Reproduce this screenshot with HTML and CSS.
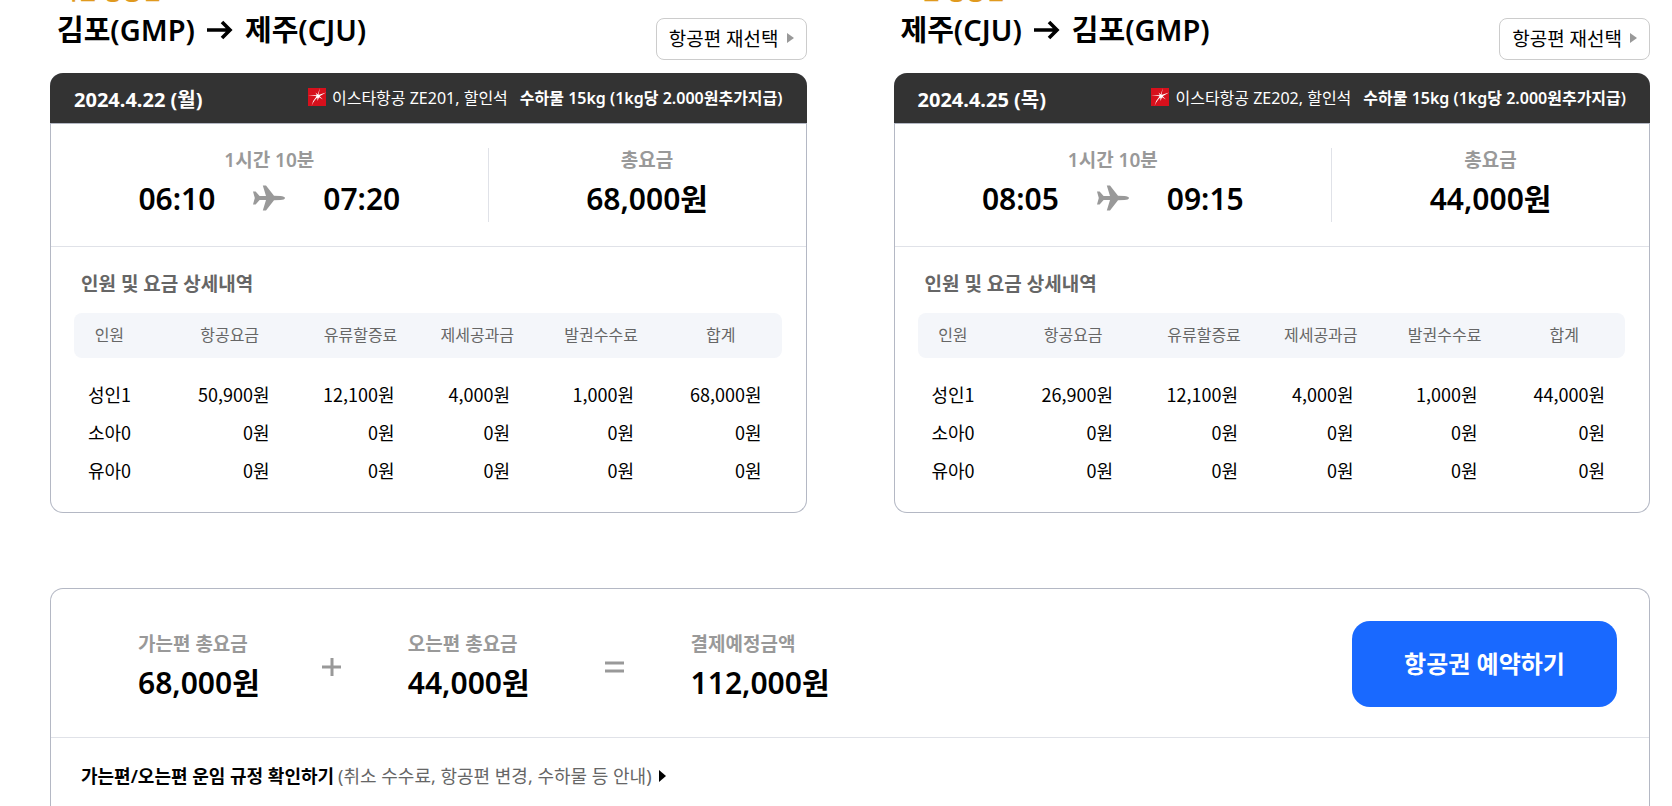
FILE: index.html
```html
<!DOCTYPE html>
<html lang="ko">
<head>
<meta charset="utf-8">
<title>항공권 예약</title>
<link rel="stylesheet" href="styles.css">
</head>
<body>
<svg class="defs" width="0" height="0" aria-hidden="true">
  <symbol id="arrow" viewBox="0 0 26 20"><path d="M0 10H23M15 2l8 8-8 8" fill="none" stroke="#000" stroke-width="3.600"/></symbol>
  <symbol id="plane" viewBox="0 0 32 26"><path d="M0 6.500h2.600l4 4.600L13 11 9.800.500h3.200L21 10.800l6.500.100c2.500.200 4.500 1 4.500 2.100s-2 1.900-4.500 2.100l-6.500.100L13 25.500H9.800L13 15l-6.400-.100-4 4.600H0L1.800 13z" fill="#999"/></symbol>
  <symbol id="star" viewBox="0 0 18 18"><rect width="18" height="18" fill="#d7101c"/><path d="M10.300 7.100L18 4.500 11.600 8.200 15 11.500 11 9.200 9.500 13 9.400 9.500Q6 12 3.500 18 5 12 8.600 8.300L0 7 8.800 7.300 7.500 4.500 9.700 6.500 12 0z" fill="#fff"/><circle cx="10" cy="8" r="1.600" fill="#fff"/></symbol>
</svg>
<main class="page">
  <div class="trips">
    <section class="trip">
      <header class="trip-head">
        <div>
          <p class="direction">가는 항공편</p>
          <h2 class="route">김포(GMP) <svg class="arrow"><use href="#arrow"/></svg> 제주(CJU)</h2>
        </div>
        <button class="reselect" type="button">항공편 재선택<span class="caret"></span></button>
      </header>
      <article class="card">
        <div class="card-bar">
          <strong class="date">2024.4.22 (월)</strong>
          <div class="airline"><svg class="logo"><use href="#star"/></svg><span>이스타항공 ZE201, 할인석</span><b>수하물 15kg (1kg당 2.000원추가지급)</b></div>
        </div>
        <div class="overview">
          <div class="flight">
            <p class="label">1시간 10분</p>
            <div class="times"><span>06:10</span><svg class="plane"><use href="#plane"/></svg><span>07:20</span></div>
          </div>
          <div class="fare"><p class="label">총요금</p><p class="amount">68,000원</p></div>
        </div>
        <div class="detail">
          <h3 class="detail-title">인원 및 요금 상세내역</h3>
          <table class="fares">
            <thead><tr><th class="who">인원</th><th class="base">항공요금</th><th class="fuel">유류할증료</th><th class="tax">제세공과금</th><th class="fee">발권수수료</th><th class="sum">합계</th></tr></thead>
            <tbody>
              <tr><td class="who">성인1</td><td class="base">50,900원</td><td class="fuel">12,100원</td><td class="tax">4,000원</td><td class="fee">1,000원</td><td class="sum">68,000원</td></tr>
              <tr><td class="who">소아0</td><td class="base">0원</td><td class="fuel">0원</td><td class="tax">0원</td><td class="fee">0원</td><td class="sum">0원</td></tr>
              <tr><td class="who">유아0</td><td class="base">0원</td><td class="fuel">0원</td><td class="tax">0원</td><td class="fee">0원</td><td class="sum">0원</td></tr>
            </tbody>
          </table>
        </div>
      </article>
    </section>
    <section class="trip">
      <header class="trip-head">
        <div>
          <p class="direction">오는 항공편</p>
          <h2 class="route">제주(CJU) <svg class="arrow"><use href="#arrow"/></svg> 김포(GMP)</h2>
        </div>
        <button class="reselect" type="button">항공편 재선택<span class="caret"></span></button>
      </header>
      <article class="card">
        <div class="card-bar">
          <strong class="date">2024.4.25 (목)</strong>
          <div class="airline"><svg class="logo"><use href="#star"/></svg><span>이스타항공 ZE202, 할인석</span><b>수하물 15kg (1kg당 2.000원추가지급)</b></div>
        </div>
        <div class="overview">
          <div class="flight">
            <p class="label">1시간 10분</p>
            <div class="times"><span>08:05</span><svg class="plane"><use href="#plane"/></svg><span>09:15</span></div>
          </div>
          <div class="fare"><p class="label">총요금</p><p class="amount">44,000원</p></div>
        </div>
        <div class="detail">
          <h3 class="detail-title">인원 및 요금 상세내역</h3>
          <table class="fares">
            <thead><tr><th class="who">인원</th><th class="base">항공요금</th><th class="fuel">유류할증료</th><th class="tax">제세공과금</th><th class="fee">발권수수료</th><th class="sum">합계</th></tr></thead>
            <tbody>
              <tr><td class="who">성인1</td><td class="base">26,900원</td><td class="fuel">12,100원</td><td class="tax">4,000원</td><td class="fee">1,000원</td><td class="sum">44,000원</td></tr>
              <tr><td class="who">소아0</td><td class="base">0원</td><td class="fuel">0원</td><td class="tax">0원</td><td class="fee">0원</td><td class="sum">0원</td></tr>
              <tr><td class="who">유아0</td><td class="base">0원</td><td class="fuel">0원</td><td class="tax">0원</td><td class="fee">0원</td><td class="sum">0원</td></tr>
            </tbody>
          </table>
        </div>
      </article>
    </section>
  </div>
  <section class="summary">
    <div class="totals">
      <div class="total"><p class="label">가는편 총요금</p><p class="amount">68,000원</p></div>
      <svg class="sign" viewBox="0 0 20 20" aria-label="더하기"><path d="M0 10h19M10 1v18" stroke="#999" stroke-width="3"/></svg>
      <div class="total"><p class="label">오는편 총요금</p><p class="amount">44,000원</p></div>
      <svg class="sign wide" viewBox="0 0 20 20" aria-label="합계"><path d="M0 6h19M0 14h19" stroke="#999" stroke-width="3"/></svg>
      <div class="total"><p class="label">결제예정금액</p><p class="amount">112,000원</p></div>
      <button class="book" type="button">항공권 예약하기</button>
    </div>
    <a class="rules" href="#rules"><b>가는편/오는편 운임 규정 확인하기</b> <span>(취소 수수료, 항공편 변경, 수하물 등 안내)</span><i class="caret dark"></i></a>
  </section>
</main>
</body>
</html>
```
FILE: styles.css
```css
* { box-sizing: border-box; }
body {
  margin: 0;
  height: 100vh;
  overflow: hidden;
  background: #fff;
  color: #000;
  font-family: "Noto Sans", "Noto Sans CJK KR", sans-serif;
  font-size: 17px;
}
p, h2, h3 { margin: 0; }
button { font-family: inherit; cursor: pointer; }
.defs { display: block; }
.page {
  display: flex;
  flex-direction: column;
  height: 100vh;
  padding: 0 22px 0 50px;
}
.trips { display: grid; grid-template-columns: 1fr 1fr; gap: 87px; }
.trip-head {
  display: flex;
  justify-content: space-between;
  align-items: flex-end;
  height: 60px;
  padding-left: 7px;
}
.direction { padding-left: 2px; color: #e09a1e; font-size: 21px; font-weight: 700; line-height: 34px; }
.route {
  display: flex;
  align-items: center;
  gap: 12px;
  margin-bottom: 8px;
  font-size: 29px;
  font-weight: 600;
  line-height: 44px;
}
.arrow { width: 26px; height: 20px; }
.reselect {
  display: flex;
  align-items: center;
  gap: 8px;
  height: 42px;
  padding: 0 12px 3px;
  border: 1px solid #ccc;
  border-radius: 8px;
  background: #fff;
  color: #000;
  font-size: 19px;
}
.caret {
  border-left: 7px solid #999;
  border-top: 5px solid transparent;
  border-bottom: 5px solid transparent;
}
.caret.dark { border-left-color: #000; border-top-width: 6px; border-bottom-width: 6px; margin-left: 7px; }
.card {
  margin-top: 13px;
  border: 1px solid #b4b8c4;
  border-top: 0;
  border-radius: 13px;
}
.card-bar {
  display: flex;
  align-items: center;
  justify-content: space-between;
  height: 50px;
  margin: 0 -1px;
  padding: 0 24px;
  border-radius: 13px 13px 0 0;
  background: #333;
  color: #fff;
}
.date { font-size: 20px; font-weight: 700; }
.airline { display: flex; align-items: center; padding-bottom: 2px; font-size: 16px; }
.logo { width: 18px; height: 18px; margin-right: 6px; }
.airline b { margin-left: 12px; font-weight: 600; }
.overview {
  display: flex;
  height: 124px;
  padding: 24px 0;
  border-top: 1px solid #b4b8c4;
  border-bottom: 1px solid #e0e2e8;
}
.flight {
  flex: 0 0 58%;
  border-right: 1px solid #e0e2e8;
  text-align: center;
}
.fare { flex: 1; text-align: center; }
.label { color: #999; font-size: 19px; font-weight: 600; line-height: 24px; }
.amount, .times { font-size: 30px; font-weight: 600; line-height: 44px; margin-top: 5px; }
.times { display: flex; align-items: center; justify-content: center; gap: 38px; }
.plane { width: 32px; height: 26px; margin-bottom: 2px; }
.detail { padding: 25px 24px 22px 23px; }
.detail-title { padding-left: 7px; color: #666; font-size: 19px; font-weight: 600; line-height: 24px; }
.fares {
  width: 100%;
  margin-top: 17px;
  border-spacing: 0;
  table-layout: fixed;
}
.fares th { height: 45px; padding: 0 0 3px; background: #f4f6fa; color: #666; font-size: 16px; font-weight: 400; }
.fares th:first-child { border-radius: 8px 0 0 8px; }
.fares th:last-child { border-radius: 0 8px 8px 0; padding-left: 6px; }
.fares tbody::before { content: ""; display: block; height: 18px; }
.fares td { height: 38px; padding: 0 0 2px; font-family: "Noto Sans CJK KR", sans-serif; font-size: 18px; text-align: right; white-space: nowrap; }
.who { width: 10%; }
.base { width: 24%; }
.fuel { width: 13%; }
.tax { width: 20%; }
.fee { width: 15%; }
.sum { width: 18%; }
.fares td.who { padding-left: 14px; text-align: left; }
.fares td.base { padding-right: 45px; }
.fares td.fuel { padding-right: 12px; }
.fares td.tax { padding-right: 38px; }
.fares td.fee { padding-right: 20px; }
.fares td.sum { padding-right: 20px; }
.summary {
  flex: 1;
  margin-top: 75px;
  border: 1px solid #b4b8c4;
  border-bottom: 0;
  border-radius: 13px 13px 0 0;
}
.totals {
  display: flex;
  align-items: flex-start;
  height: 149px;
  padding: 32px 32px 0 87px;
  border-bottom: 1px solid #e0e2e8;
}
.total { padding-top: 11px; white-space: nowrap; }
.sign { width: 20px; height: 20px; margin: 36px 66px 0 62px; }
.sign.wide { margin: 36px 66px 0 75px; }
.book {
  width: 265px;
  height: 86px;
  margin-left: auto;
  padding-bottom: 4px;
  border: 0;
  border-radius: 18px;
  background: #1969ff;
  color: #fff;
  font-size: 24px;
  font-weight: 600;
}
.rules {
  display: flex;
  align-items: center;
  padding: 26px 30px;
  color: #000;
  font-size: 18px;
  line-height: 24px;
  text-decoration: none;
}
.rules b { font-weight: 600; }
.rules span { margin-left: 4px; color: #666; }
```
